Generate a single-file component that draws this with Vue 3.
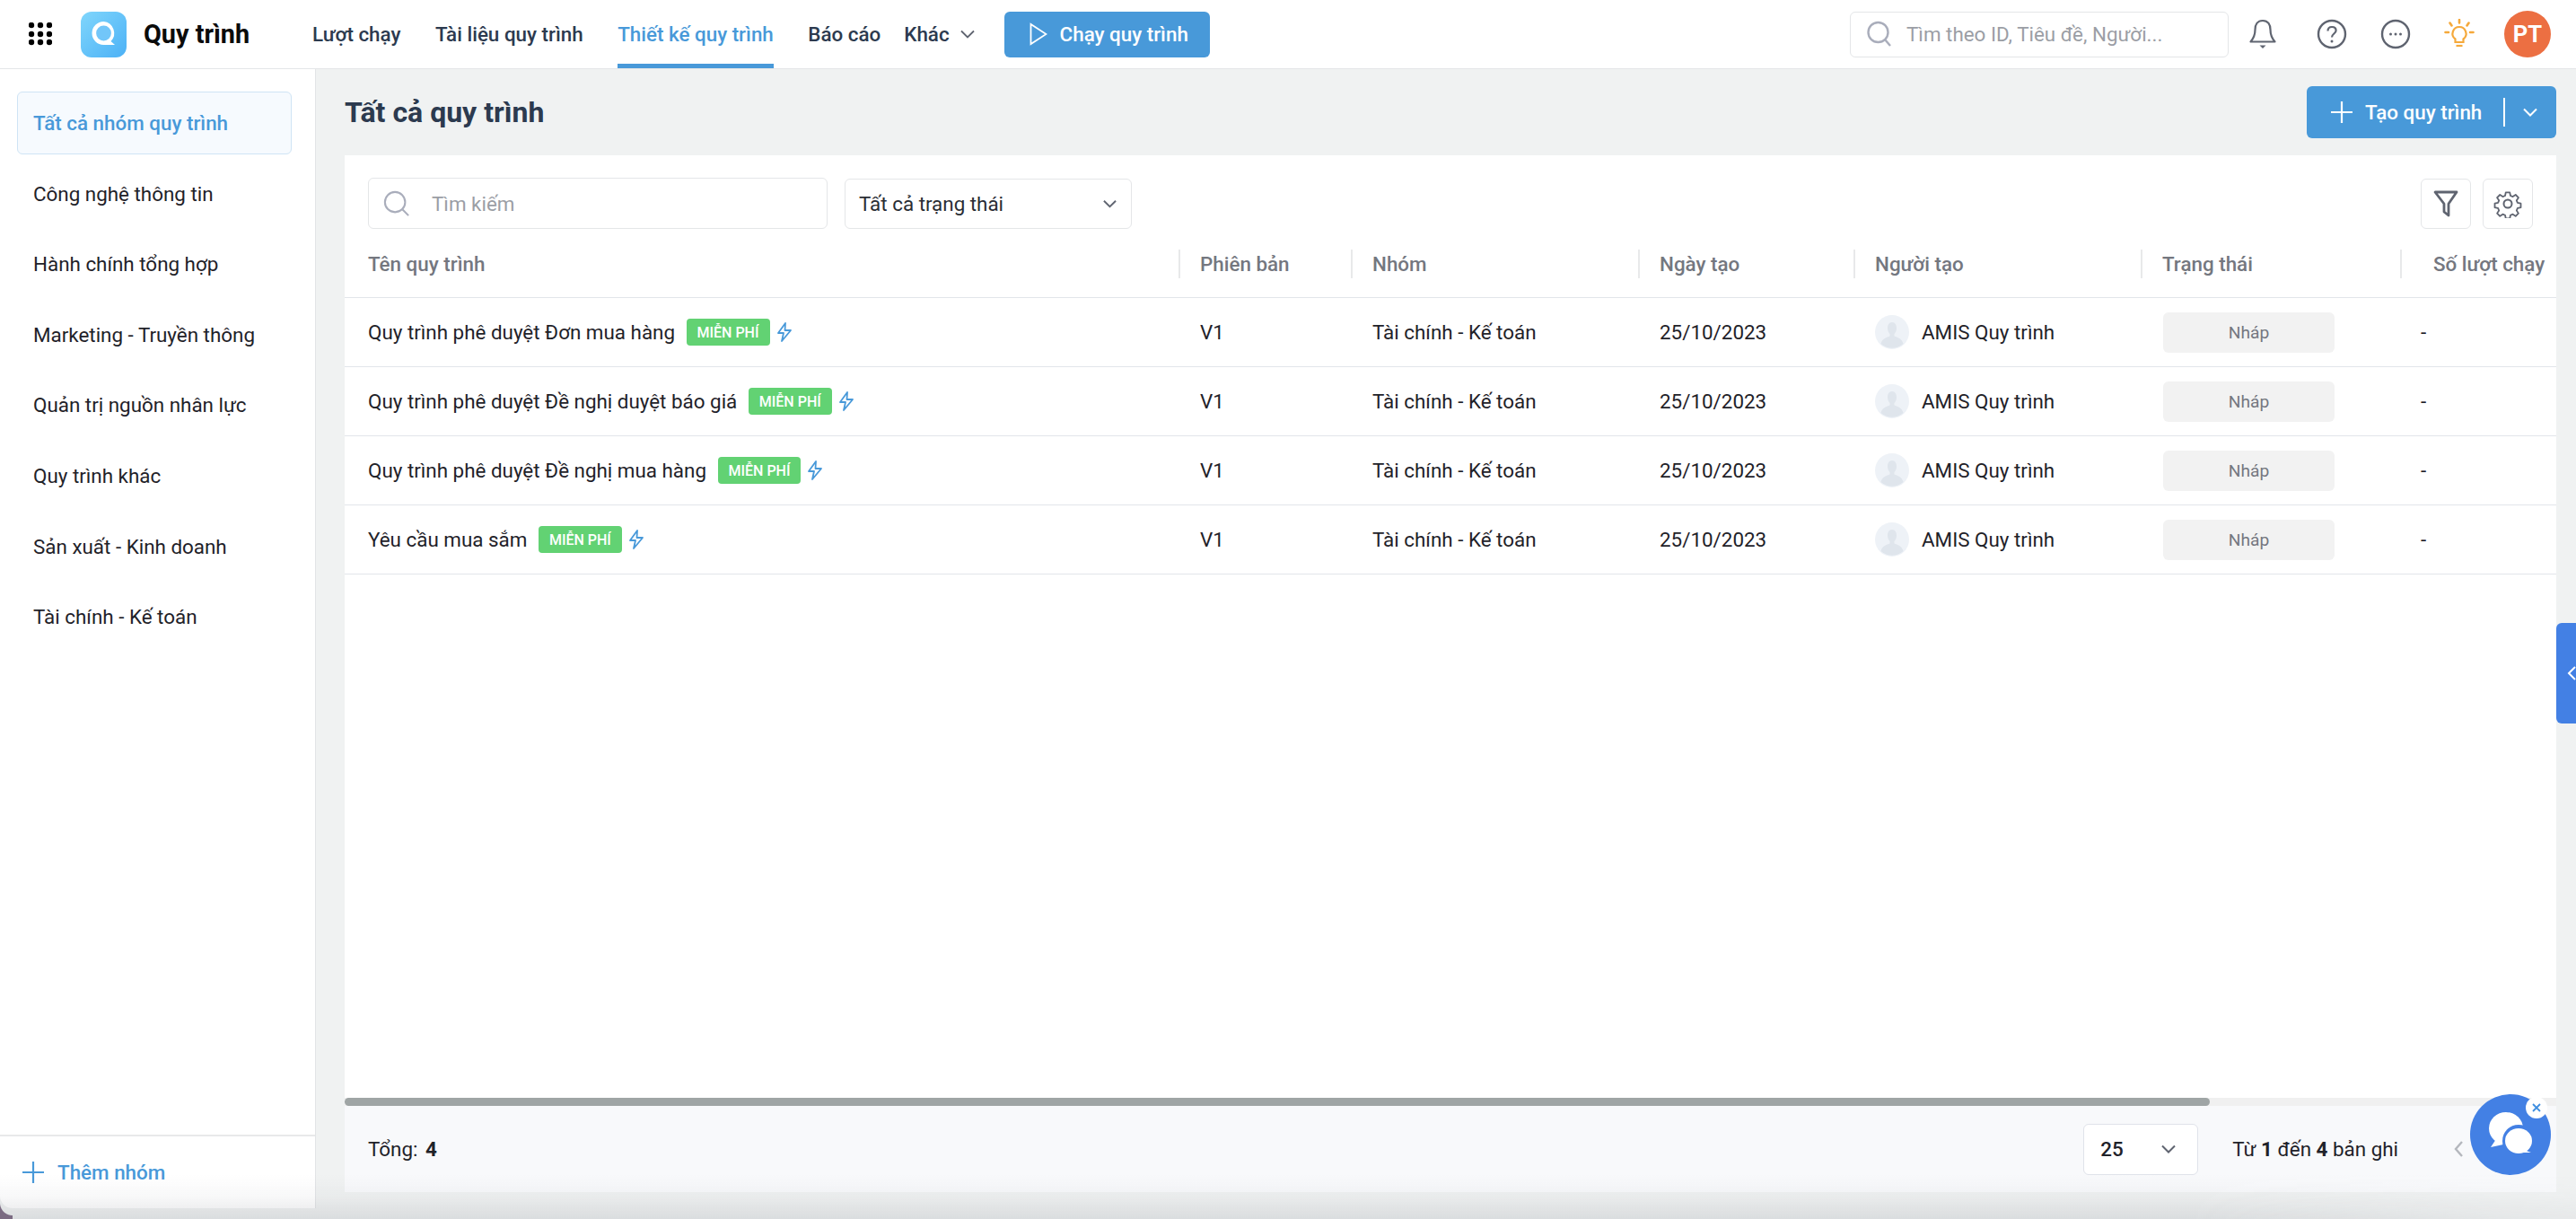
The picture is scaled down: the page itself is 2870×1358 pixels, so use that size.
<template>
  <div class="app">
    <header class="topbar">
      <svg class="apps" viewBox="0 0 26 26" fill="#000">
        <template v-for="y in [3, 13, 22]" :key="y">
          <circle v-for="x in [3, 13, 23]" :key="x" :cx="x" :cy="y" r="3.2" />
        </template>
      </svg>
      <svg class="logo" viewBox="0 0 51 51">
        <defs>
          <linearGradient id="logoBg" x1="0" y1="0" x2="1" y2="1">
            <stop offset="0" stop-color="#80d6fc" />
            <stop offset="1" stop-color="#4cb1f6" />
          </linearGradient>
        </defs>
        <rect width="51" height="51" rx="12" fill="url(#logoBg)" />
        <path d="M25.5 11a13 13 0 1 0 0 26h12.5l-4.5-4a13 13 0 0 0-8-22z" fill="#fff" />
        <circle cx="25.5" cy="24" r="8.4" fill="#72c6f9" />
      </svg>
      <div class="app-name">Quy trình</div>
      <nav class="nav">
        <a class="nav-item">Lượt chạy</a>
        <a class="nav-item">Tài liệu quy trình</a>
        <a class="nav-item nav-item--active">Thiết kế quy trình</a>
        <a class="nav-item">Báo cáo</a>
        <a class="nav-item nav-item--more">
          Khác
          <svg class="nav-caret" viewBox="0 0 16 10" fill="none" stroke="#5f6470" stroke-width="1.8"><path d="M1 1.5l7 7 7-7" /></svg>
        </a>
      </nav>
      <button class="run-btn">
        <svg viewBox="0 0 20 26" width="20" height="26" fill="none" stroke="#fff" stroke-width="1.8"><path d="M1.5 2v22L18.5 13z" /></svg>
        Chạy quy trình
      </button>
      <div class="top-right">
        <div class="global-search">
          <svg viewBox="0 0 28 30" width="28" height="30" fill="none" stroke="#a9adbb" stroke-width="2.4"><circle cx="12.5" cy="13" r="11" /><path d="M20 21l6 7" /></svg>
          <span>Tìm theo ID, Tiêu đề, Người...</span>
        </div>
        <svg class="top-icon bell" viewBox="0 0 34 34" fill="none" stroke="#5f6470" stroke-width="2.2">
          <path d="M17 2c-6 0-8.500 4.500-8.500 10 0 7-2 10-5 13.500h27c-3-3.500-5-6.500-5-13.500C25.500 6.500 23 2 17 2z" stroke-linejoin="round" />
          <path d="M13.500 29.500h7L17 33z" fill="#5f6470" stroke="none" />
        </svg>
        <svg class="top-icon help" viewBox="0 0 34 34" fill="none" stroke="#5f6470" stroke-width="2.400">
          <circle cx="17" cy="17" r="15" />
          <path d="M12.500 13.500c0-2.800 2-4.500 4.600-4.500s4.500 1.600 4.500 4c0 3.500-4.600 3.600-4.600 7.500" stroke-width="2.200" />
          <circle cx="17" cy="25" r="1.500" fill="#5f6470" stroke="none" />
        </svg>
        <svg class="top-icon more" viewBox="0 0 34 34" fill="none" stroke="#5f6470" stroke-width="2.400">
          <circle cx="17" cy="17" r="15" />
          <g fill="#5f6470" stroke="none"><circle cx="11.500" cy="17" r="1.500" /><circle cx="17" cy="17" r="1.500" /><circle cx="22.500" cy="17" r="1.500" /></g>
        </svg>
        <svg class="top-icon bulb" viewBox="0 0 34 34" fill="none" stroke="#f5a93b" stroke-width="2.200">
          <path d="M17 9a7.500 7.500 0 0 0-4.500 13.500V26h9v-3.500A7.500 7.500 0 0 0 17 9z" />
          <path d="M13.500 30h7" />
          <path d="M17 1v3.500M6.500 4.500l2 3M27.500 4.500l-2 3M1.500 15h3.500M29 15h3.500" stroke-linecap="round" stroke-width="2.600" />
        </svg>
        <div class="avatar">PT</div>
      </div>
    </header>

    <div class="body">
      <aside class="sidebar">
        <ul class="groups">
          <li v-for="(g, i) in groups" :key="g" class="group" :class="{ 'group--active': i === 0 }">{{ g }}</li>
        </ul>
        <div class="add-group">
          <svg viewBox="0 0 26 26" width="26" height="26" stroke="#4899d9" stroke-width="2.200"><path d="M13 1v24M1 13h24" /></svg>
          Thêm nhóm
        </div>
      </aside>

      <main class="main">
        <div class="page-head">
          <h1>Tất cả quy trình</h1>
          <div class="create-btn">
            <svg viewBox="0 0 26 26" width="26" height="26" stroke="#fff" stroke-width="2.200"><path d="M13 1v24M1 13h24" /></svg>
            <span class="create-label">Tạo quy trình</span>
            <span class="create-split"></span>
            <svg viewBox="0 0 16 10" width="16" height="10" fill="none" stroke="#fff" stroke-width="2"><path d="M1 1.500l7 7 7-7" /></svg>
          </div>
        </div>

        <section class="card">
          <div class="toolbar">
            <div class="search">
              <svg viewBox="0 0 32 32" width="30" height="30" fill="none" stroke="#a9adbb" stroke-width="2.200"><circle cx="14" cy="14" r="12" /><path d="M23 23l7 7" /></svg>
              <span>Tìm kiếm</span>
            </div>
            <div class="status-select">
              <span>Tất cả trạng thái</span>
              <svg viewBox="0 0 16 10" width="15" height="10" fill="none" stroke="#5f6470" stroke-width="2"><path d="M1 1.500l7 7 7-7" /></svg>
            </div>
            <div class="tool-btn tool-btn--first">
              <svg viewBox="0 0 28 30" width="28" height="30" fill="none" stroke="#5f6470" stroke-width="2.800" stroke-linejoin="round"><path d="M2 2h24l-9 13v13l-5-4V15z" /></svg>
            </div>
            <div class="tool-btn">
              <svg viewBox="0 0 32 32" width="32" height="32" fill="none" stroke="#5f6470" stroke-width="2" stroke-linejoin="round">
                <circle cx="16" cy="16" r="4.500" />
                <path d="M13.500 2h5l.8 4 2.900 1.200 3.500-2.300 3.500 3.500-2.300 3.500 1.200 2.900 4 .8v5l-4 .8-1.200 2.900 2.300 3.500-3.500 3.500-3.500-2.300-2.900 1.200-.8 4h-5l-.8-4-2.900-1.200-3.500 2.300-3.500-3.500 2.300-3.500-1.200-2.900-4-.8v-5l4-.8 1.200-2.900-2.300-3.500 3.500-3.500 3.500 2.300 2.900-1.200z" transform="translate(1.600 1.600) scale(.9)" />
              </svg>
            </div>
          </div>

          <div class="table">
            <div class="row row--head">
              <div v-for="(c, i) in columns" :key="c" class="th" :class="{ 'th--sep': i > 0 }">{{ c }}</div>
            </div>
            <div v-for="r in rows" :key="r" class="row">
              <div class="td td--name">
                <span>{{ r }}</span>
                <span class="free">MIỄN PHÍ</span>
                <svg class="bolt" viewBox="0 0 18 22" fill="none" stroke="#4899d9" stroke-width="1.800" stroke-linejoin="round"><path d="M10 1L2 12h6l-2 9 10-12h-6.500z" /></svg>
              </div>
              <div class="td">V1</div>
              <div class="td">Tài chính - Kế toán</div>
              <div class="td">25/10/2023</div>
              <div class="td td--user">
                <svg class="user-pic" viewBox="0 0 38 38">
                  <circle cx="19" cy="19" r="19" fill="#eef2f7" />
                  <path d="M19 8c-3.500 0-5 3-5 6.500 0 3 1 5 2.500 6.500v2.500C13 25 8 26 6.500 32a19 19 0 0 0 25 0C30 26 25 25 21.500 23.500V21c1.500-1.500 2.500-3.500 2.500-6.500C24 11 22.500 8 19 8z" fill="#dfe5ec" />
                </svg>
                AMIS Quy trình
              </div>
              <div class="td td--status"><span class="status">Nháp</span></div>
              <div class="td td--dash">-</div>
            </div>
            <div class="table-fill"></div>
            <div class="hscroll"><div class="hscroll-thumb"></div></div>
          </div>

          <footer class="pager">
            <div class="total">Tổng: <b>4</b></div>
            <div class="page-size">
              <b>25</b>
              <svg viewBox="0 0 16 10" width="16" height="10" fill="none" stroke="#5f6470" stroke-width="2"><path d="M1 1.500l7 7 7-7" /></svg>
            </div>
            <div class="range">Từ <b>1</b> đến <b>4</b> bản ghi</div>
            <svg class="prev" viewBox="0 0 10 18" width="10" height="18" fill="none" stroke="#b4b7bd" stroke-width="2.400"><path d="M9 1L2 9l7 8" /></svg>
          </footer>
        </section>
      </main>
    </div>

    <div class="side-tab">
      <svg viewBox="0 0 10 16" width="10" height="16" fill="none" stroke="#fff" stroke-width="2"><path d="M9 1L2 8l7 7" /></svg>
    </div>

    <div class="chat">
      <svg viewBox="0 0 90 90" width="90" height="90">
        <ellipse cx="40" cy="38" rx="19" ry="18" fill="#fff" />
        <path d="M29 50l-6 9 14-3z" fill="#fff" />
        <circle cx="54" cy="52" r="18" fill="#4380e4" />
        <ellipse cx="54" cy="52" rx="15" ry="14" fill="#fff" />
        <path d="M60 62l8 3-11 0z" fill="#fff" />
      </svg>
      <span class="chat-close">
        <svg viewBox="0 0 10 10" width="10" height="10" stroke="#3f8ee0" stroke-width="1.800"><path d="M1 1l8 8M9 1l-8 8" /></svg>
      </span>
    </div>

    <div class="window-edge"></div>
    <div class="window-corner"></div>
  </div>
</template>

<script setup>
const groups = [
  'Tất cả nhóm quy trình',
  'Công nghệ thông tin',
  'Hành chính tổng hợp',
  'Marketing - Truyền thông',
  'Quản trị nguồn nhân lực',
  'Quy trình khác',
  'Sản xuất - Kinh doanh',
  'Tài chính - Kế toán'
]

const columns = ['Tên quy trình', 'Phiên bản', 'Nhóm', 'Ngày tạo', 'Người tạo', 'Trạng thái', 'Số lượt chạy']

const rows = [
  'Quy trình phê duyệt Đơn mua hàng',
  'Quy trình phê duyệt Đề nghị duyệt báo giá',
  'Quy trình phê duyệt Đề nghị mua hàng',
  'Yêu cầu mua sắm'
]
</script>

<style scoped>
.app {
  position: relative;
  width: 2870px;
  height: 1358px;
  display: flex;
  flex-direction: column;
  overflow: hidden;
  background: #f0f2f2;
  font-family: Roboto, "Liberation Sans", sans-serif;
  font-size: 22.400px;
  color: #1f2229;
}

.topbar {
  flex: none;
  height: 76px;
  display: flex;
  align-items: center;
  padding: 0 28px 0 32px;
  background: #fff;
  border-bottom: 1px solid #e4e6e8;
}

.apps {
  width: 26px;
  height: 26px;
}

.logo {
  width: 51px;
  height: 51px;
  margin-left: 32px;
}

.app-name {
  margin-left: 19px;
  font-size: 28.800px;
  font-weight: 700;
  color: #0b0b0b;
}

.nav {
  display: flex;
  align-self: stretch;
  margin-left: 70px;
}

.nav-item {
  display: flex;
  align-items: center;
  gap: 12px;
  margin-right: 38.500px;
  color: #2c3a4f;
  font-weight: 500;
  border-bottom: 5px solid transparent;
  border-top: 5px solid transparent;
}

.nav-item--active {
  color: #4899d9;
  border-bottom-color: #4899d9;
}

.nav-item:nth-child(4) {
  margin-right: 26px;
}

.nav-item--more {
  margin-right: 33px;
}

.nav-caret {
  width: 16px;
  height: 10px;
}

.run-btn {
  height: 51px;
  width: 229px;
  display: flex;
  align-items: center;
  gap: 14px;
  padding: 0 0 0 28px;
  border: 0;
  border-radius: 6px;
  background: #4899d9;
  color: #fff;
  font: 500 22.400px Roboto, "Liberation Sans", sans-serif;
}

.top-right {
  margin-left: auto;
  display: flex;
  align-items: center;
}

.global-search {
  width: 422px;
  height: 51px;
  box-sizing: border-box;
  display: flex;
  align-items: center;
  gap: 16px;
  padding-left: 18px;
  border: 1px solid #e4e6e8;
  border-radius: 6px;
  color: #9b9ea5;
}

.top-icon {
  width: 34px;
  height: 34px;
}

.bell {
  margin-left: 21px;
}

.help {
  margin-left: 43px;
}

.more,
.bulb {
  margin-left: 37px;
}

.avatar {
  width: 52px;
  height: 52px;
  margin-left: 33px;
  border-radius: 50%;
  background: #ec6f42;
  color: #fff;
  font-size: 25.600px;
  font-weight: 700;
  display: flex;
  align-items: center;
  justify-content: center;
}

.body {
  flex: 1;
  min-height: 0;
  display: flex;
}

.sidebar {
  flex: none;
  width: 351px;
  margin-bottom: 12px;
  display: flex;
  flex-direction: column;
  background: #fff;
  border-right: 1px solid #e2e4e6;
  border-bottom-left-radius: 14px;
}

.groups {
  flex: 1;
  margin: 0;
  padding: 25px 26px 0 19px;
  list-style: none;
}

.group {
  height: 70px;
  margin-bottom: 8.600px;
  box-sizing: border-box;
  display: flex;
  align-items: center;
  padding-left: 17px;
  border: 1px solid transparent;
  border-radius: 6px;
  color: #1f2229;
}

.group--active {
  background: #f6fafe;
  border-color: #cfe4f5;
  color: #4899d9;
  font-weight: 500;
}

.add-group {
  flex: none;
  height: 80px;
  display: flex;
  align-items: center;
  gap: 14px;
  padding-left: 24px;
  border-top: 2px solid #e8e9ea;
  color: #4899d9;
  font-weight: 500;
}

.main {
  flex: 1;
  min-width: 0;
  display: flex;
  flex-direction: column;
  padding: 0 22px 30px 32px;
}

.page-head {
  flex: none;
  height: 96px;
  display: flex;
  align-items: center;
  justify-content: space-between;
}

.page-head h1 {
  margin: 0;
  font-size: 32px;
  font-weight: 700;
  color: #2c3a4f;
}

.create-btn {
  width: 278px;
  height: 58px;
  box-sizing: border-box;
  display: flex;
  align-items: center;
  padding-left: 26px;
  border-radius: 6px;
  background: #4899d9;
  color: #fff;
  font-weight: 500;
}

.create-label {
  margin-left: 13px;
}

.create-split {
  width: 2px;
  height: 32px;
  margin: 0 20px 0 24px;
  background: #fff;
}

.card {
  flex: 1;
  min-height: 0;
  display: flex;
  flex-direction: column;
  background: #fff;
}

.toolbar {
  flex: none;
  height: 87px;
  box-sizing: border-box;
  display: flex;
  align-items: flex-start;
  padding: 25px 26px 0;
}

.search {
  width: 512px;
  height: 57px;
  box-sizing: border-box;
  display: flex;
  align-items: center;
  gap: 24px;
  padding-left: 16px;
  border: 1px solid #e4e6e8;
  border-radius: 6px;
  color: #9b9ea5;
}

.status-select {
  width: 320px;
  height: 56px;
  margin: 1px 0 0 19px;
  box-sizing: border-box;
  display: flex;
  align-items: center;
  justify-content: space-between;
  padding: 0 16px 0 15px;
  border: 1px solid #e4e6e8;
  border-radius: 6px;
  color: #2a2d34;
}

.tool-btn {
  width: 56px;
  height: 56px;
  margin: 1px 0 0 13px;
  box-sizing: border-box;
  display: flex;
  align-items: center;
  justify-content: center;
  border: 1px solid #e4e6e8;
  border-radius: 6px;
}

.tool-btn--first {
  margin-left: auto;
}

.table {
  flex: 1;
  min-height: 0;
  display: flex;
  flex-direction: column;
}

.row {
  flex: none;
  height: 77px;
  box-sizing: border-box;
  display: grid;
  grid-template-columns: 929px 192px 320px 240px 320px 289px 1fr;
  align-items: center;
  border-bottom: 1px solid #e2e5ea;
}

.row--head {
  height: 72px;
  padding-bottom: 3px;
}

.th {
  height: 32px;
  box-sizing: border-box;
  display: flex;
  align-items: center;
  padding-left: 26px;
  color: #74777f;
  font-weight: 500;
  white-space: nowrap;
}

.th--sep {
  padding-left: 22px;
  border-left: 2px solid #e8e9ea;
}

.th:last-child {
  padding-left: 35px;
}

.td {
  padding-left: 24px;
  display: flex;
  align-items: center;
  white-space: nowrap;
}

.td--name {
  padding-left: 26px;
}

.free {
  height: 30px;
  margin-left: 12.500px;
  padding: 0 12px;
  display: flex;
  align-items: center;
  border-radius: 4px;
  background: #62d273;
  color: #fff;
  font-size: 16px;
  font-weight: 500;
}

.bolt {
  width: 18px;
  height: 22px;
  margin-left: 7px;
}

.td--user {
  gap: 14px;
}

.user-pic {
  width: 38px;
  height: 38px;
}

.td--status {
  padding-left: 25px;
}

.status {
  width: 191px;
  height: 45px;
  display: flex;
  align-items: center;
  justify-content: center;
  border-radius: 6px;
  background: #f2f2f2;
  color: #74777f;
  font-size: 19.200px;
}

.td--dash {
  padding-left: 23px;
}

.table-fill {
  flex: 1;
}

.hscroll {
  flex: none;
  height: 9px;
  background: #f0f0f0;
}

.hscroll-thumb {
  width: 2078px;
  height: 100%;
  border-radius: 5px;
  background: #9fa5a5;
}

.pager {
  flex: none;
  height: 96px;
  box-sizing: border-box;
  display: flex;
  align-items: center;
  padding-left: 26px;
  background: #f8f9fb;
}

.total b {
  margin-left: 3px;
  font-weight: 700;
}

.page-size {
  width: 128px;
  height: 57px;
  box-sizing: border-box;
  margin-left: auto;
  display: flex;
  align-items: center;
  justify-content: space-between;
  padding: 0 24px 0 18px;
  border: 1px solid #e0e3ea;
  border-radius: 6px;
  background: #fff;
}

.page-size b {
  font-weight: 500;
}

.range b {
  font-weight: 700;
}

.range {
  margin-left: 38px;
}

.prev {
  margin: 0 104px 0 62px;
}

.side-tab {
  position: absolute;
  top: 694px;
  right: 0;
  width: 22px;
  height: 112px;
  display: flex;
  align-items: center;
  justify-content: flex-end;
  border-radius: 6px 0 0 6px;
  background: #4380e4;
}

.chat {
  position: absolute;
  left: 2752px;
  top: 1219px;
  width: 90px;
  height: 90px;
  border-radius: 50%;
  background: #4380e4;
}

.chat svg {
  display: block;
}

.chat-close {
  position: absolute;
  left: 62px;
  top: 3px;
  width: 24px;
  height: 24px;
  display: flex;
  align-items: center;
  justify-content: center;
  border-radius: 50%;
  background: #fff;
}

.window-edge {
  position: absolute;
  left: 0;
  right: 0;
  bottom: 0;
  height: 50px;
  pointer-events: none;
  background: linear-gradient(rgba(120, 125, 135, 0), rgba(120, 125, 135, 0.05) 50%, rgba(120, 125, 135, 0.18));
  mask-image: linear-gradient(90deg, #000 85%, rgba(0, 0, 0, 0.4));
}

.window-corner {
  position: absolute;
  left: 0;
  bottom: 0;
  width: 14px;
  height: 18px;
  pointer-events: none;
  background: radial-gradient(circle at 100% 0, transparent 13.500px, #7b6b82 14.500px);
}
</style>

<style>
html,
body {
  margin: 0;
  background: #f0f2f2;
}
</style>
